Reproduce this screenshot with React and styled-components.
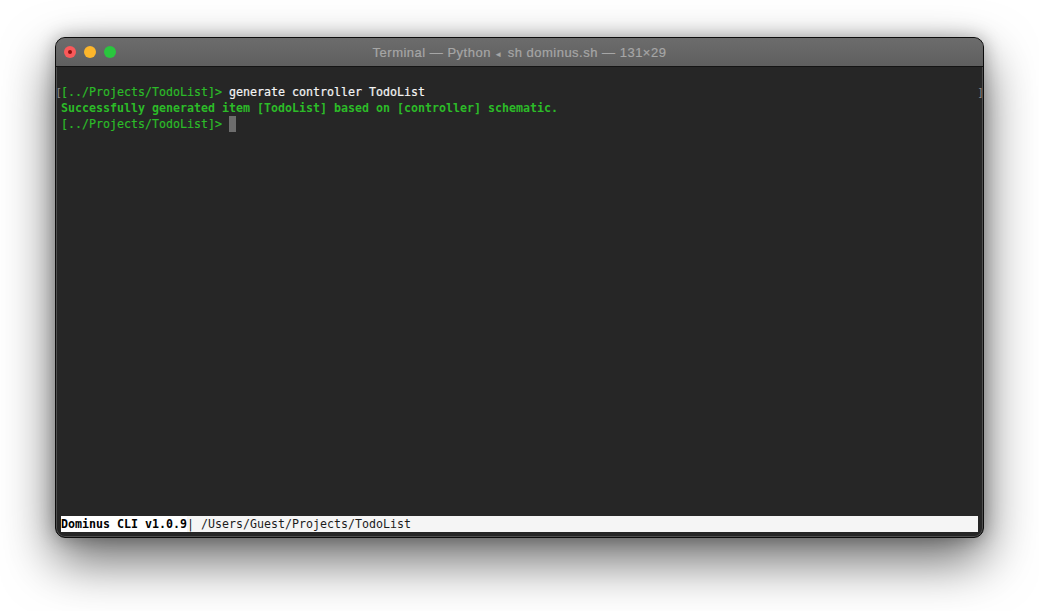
import React from "react";
import styled, { createGlobalStyle } from "styled-components";

const GlobalStyle = createGlobalStyle`
  html, body {
    margin: 0;
    background: #ffffff;
  }
`;

const Page = styled.div`
  width: 1039px;
  height: 611px;
  overflow: hidden;
  box-sizing: border-box;
  padding: 37px 55px 0 55px;
`;

const Shadow = styled.div`
  width: 929px;
  height: 501px;
  border-radius: 10px;
  box-shadow: 0 22px 52px rgba(0, 0, 0, 0.6), 0 0 18px rgba(0, 0, 0, 0.28);
`;

const Window = styled.div`
  width: 929px;
  height: 501px;
  box-sizing: border-box;
  display: flex;
  flex-direction: column;
  border-radius: 10px;
  overflow: hidden;
  background: #262626;
  border: 1px solid #0c0c0c;
  box-shadow: inset 0 0 0 1px #4e4e4e;
`;

const TitleBar = styled.div`
  position: relative;
  height: 28px;
  flex: none;
  display: flex;
  align-items: center;
  justify-content: center;
  background: linear-gradient(#6c6c6c, #5f5f5f);
  border-bottom: 1px solid #141414;
`;

const Lights = styled.div`
  position: absolute;
  left: 8px;
  top: 8px;
  display: flex;
  gap: 8px;
`;

const Light = styled.span`
  width: 12px;
  height: 12px;
  border-radius: 50%;
  background: ${(p) => p.$color};
  display: flex;
  align-items: center;
  justify-content: center;
`;

const CloseDot = styled.span`
  width: 4px;
  height: 4px;
  border-radius: 50%;
  background: #8c0f0c;
`;

const Title = styled.div`
  font-family: "Liberation Sans", Arial, sans-serif;
  font-size: 13px;
  letter-spacing: 0.5px;
  color: #a6a6a6;
  white-space: nowrap;
  -webkit-text-stroke: 0.2px #a6a6a6;
`;

const TitleArrow = styled.span`
  font-size: 9px;
  margin: 0 2px 0 1px;
`;

const Screen = styled.div`
  flex: 1;
  min-height: 0;
  display: flex;
  flex-direction: column;
  padding: 17px 0 5px 1px;
  font-family: "DejaVu Sans Mono", "Liberation Mono", monospace;
  font-size: 11.63px;
  line-height: 16px;
  white-space: pre;
`;

const Row = styled.div`
  height: 16px;
  display: flex;
  padding: 0 0 0 4px;
  color: ${(p) => p.$color || "#2cbb28"};
  font-weight: ${(p) => (p.$bold ? 700 : 400)};
  -webkit-text-stroke: ${(p) => (p.$bold ? "0" : "0.2px")};
`;

const FirstRow = styled(Row)`
  padding: 0;
  justify-content: space-between;
`;

/* the dim brackets sit in the 4px gutters either side of the grid */
const Edge = styled.span`
  font-family: "Liberation Sans", Arial, sans-serif;
  color: #8a8a8a;
  width: 4px;
  -webkit-text-stroke: 0;
`;

const Command = styled.span`
  color: #f4f4f4;
`;

const RowBody = styled.span`
  flex: 1;
`;

const Cursor = styled.span`
  display: inline-block;
  width: 7px;
  height: 16px;
  vertical-align: top;
  background: #6d6d6d;
`;

const Spacer = styled.div`
  flex: 1;
`;

const StatusBar = styled.div`
  height: 16px;
  margin: 0 5px 0 4px;
  display: flex;
  background: #f5f5f5;
  color: #1c1c1c;
`;

const StatusName = styled.span`
  background: #ffffff;
  color: #000000;
  font-weight: 700;
`;

export default function App() {
  return (
    <Page>
      <GlobalStyle />
      <Shadow>
        <Window>
          <TitleBar>
            <Lights>
              <Light $color="#f9595a">
                <CloseDot />
              </Light>
              <Light $color="#fdb62b" />
              <Light $color="#2ac63e" />
            </Lights>
            <Title>
              Terminal — Python <TitleArrow>◂</TitleArrow> sh dominus.sh — 131×29
            </Title>
          </TitleBar>
          <Screen>
            <FirstRow>
              <Edge>[</Edge>
              <RowBody>
                [../Projects/TodoList]&gt; <Command>generate controller TodoList</Command>
              </RowBody>
              <Edge>]</Edge>
            </FirstRow>
            <Row $bold>Successfully generated item [TodoList] based on [controller] schematic.</Row>
            <Row>
              <span>
                [../Projects/TodoList]&gt; <Cursor />
              </span>
            </Row>
            <Spacer />
            <StatusBar>
              <StatusName>Dominus CLI v1.0.9</StatusName>
              <span>| /Users/Guest/Projects/TodoList</span>
            </StatusBar>
          </Screen>
        </Window>
      </Shadow>
    </Page>
  );
}
